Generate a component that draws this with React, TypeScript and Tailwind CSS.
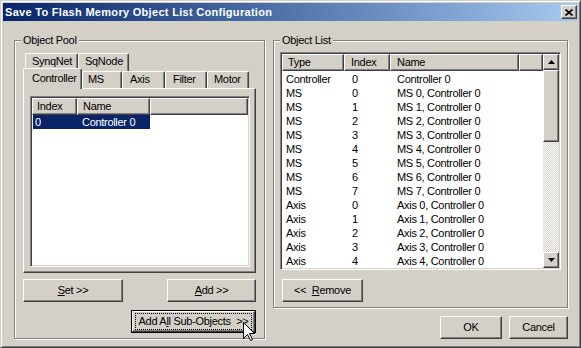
import React from 'react';

const raised =
  'bg-[#d4d0c8] border border-t-white border-l-white border-r-[#404040] border-b-[#404040] shadow-[inset_-1px_-1px_0_#808080]';
const sunken =
  'border border-t-[#808080] border-l-[#808080] border-r-white border-b-white shadow-[inset_1px_1px_0_#404040,inset_-1px_-1px_0_#d4d0c8] p-[1px]';
const etched = 'relative border border-[#808080] shadow-[inset_1px_1px_0_#fff,1px_1px_0_#fff]';

const objectRows: [string, string, string][] = [
  ['Controller', '0', 'Controller 0'],
  ...[0, 1, 2, 3, 4, 5, 6, 7].map((i): [string, string, string] => ['MS', `${i}`, `MS ${i}, Controller 0`]),
  ...[0, 1, 2, 3, 4].map((i): [string, string, string] => ['Axis', `${i}`, `Axis ${i}, Controller 0`]),
];

// Classic push button
function Button({ className = '', children }: { className?: string; children: React.ReactNode }) {
  return (
    <div className={`${raised} h-[23px] flex items-center justify-center ${className}`}>
      {children}
    </div>
  );
}

function GroupLabel({ children }: { children: React.ReactNode }) {
  return (
    <div className="absolute left-[6px] -top-[7px] px-[2px] bg-[#d4d0c8] leading-[13px]">{children}</div>
  );
}

function HeaderCell({ className = '', children }: { className?: string; children?: React.ReactNode }) {
  return (
    <div className={`${raised} h-full flex items-center leading-[13px] ${className}`}>{children}</div>
  );
}

function ScrollArrow({ up }: { up?: boolean }) {
  return (
    <div className={`${raised} h-[16px] w-[16px] flex items-center justify-center`}>
      <svg width="7" height="4" viewBox="0 0 7 4">
        <polygon points={up ? '0,4 3.5,0 7,4' : '0,0 7,0 3.5,4'} fill="#000" />
      </svg>
    </div>
  );
}

function Tab({ className = '', children }: { className?: string; children: React.ReactNode }) {
  return (
    <div
      className={`bg-[#d4d0c8] border-t border-l border-r border-t-white border-l-white border-r-[#404040] shadow-[inset_-1px_0_0_#808080] rounded-t-[2px] leading-[13px] ${className}`}
    >
      {children}
    </div>
  );
}

export default function App() {
  return (
    <div className="w-[581px] h-[348px] bg-[#d4d0c8] font-['Liberation_Sans',Arial,sans-serif] text-[11px] tracking-[-0.3px] text-black border border-t-[#d4d0c8] border-l-[#d4d0c8] border-r-[#404040] border-b-[#404040] shadow-[inset_1px_1px_0_#fff,inset_-1px_-1px_0_#808080] p-[2px] flex flex-col overflow-hidden">
      {/* Title bar */}
      <div className="h-[18px] flex items-center bg-gradient-to-r from-[#0a246a] to-[#a6caf0] pl-[2px] pr-[1px]">
        <span className="text-white font-bold tracking-[0.3px] leading-[13px] flex-1">
          Save To Flash Memory Object List Configuration
        </span>
        <div className={`${raised} w-[16px] h-[14px] flex items-center justify-center`}>
          <svg width="8" height="7" viewBox="0 0 8 7">
            <path d="M0.5 0.5 L7.5 6.5 M7.5 0.5 L0.5 6.5" stroke="#000" strokeWidth="1.7" />
          </svg>
        </div>
      </div>

      <div className="flex">
        {/* Object Pool */}
        <div className={`${etched} ml-[11px] mt-[19px] w-[251px] h-[299px] pl-[8px] pt-[12px]`}>
          <GroupLabel>Object Pool</GroupLabel>

          {/* back tab row */}
          <div className="flex h-[18px] ml-[2px]">
            <Tab className="w-[53px] h-[18px] pl-[6px] pt-[1px]">SynqNet</Tab>
            <Tab className="w-[51px] h-[18px] pl-[6px] pt-[1px]">SqNode</Tab>
          </div>
          {/* front tab row */}
          <div className="flex items-end h-[17px]">
            <Tab className="relative z-10 w-[59px] h-[21px] -mb-[1px] pl-[8px] pt-[3px]">Controller</Tab>
            <Tab className="w-[40px] h-[17px] pl-[5px] pt-[1px]">MS</Tab>
            <Tab className="w-[43px] h-[17px] pl-[7px] pt-[1px]">Axis</Tab>
            <Tab className="w-[42px] h-[17px] pl-[7px] pt-[1px]">Filter</Tab>
            <Tab className="w-[42px] h-[17px] pl-[6px] pt-[1px]">Motor</Tab>
          </div>
          <div className={`${raised} w-[233px] h-[185px] pl-[6px] pt-[7px]`}>
            <div className={`${sunken} bg-white w-[220px] h-[171px] flex flex-col`}>
              <div className="flex h-[17px]">
                <HeaderCell className="w-[45px] pl-[4px]">Index</HeaderCell>
                <HeaderCell className="w-[73px] pl-[5px]">Name</HeaderCell>
                <HeaderCell className="flex-1" />
              </div>
              <div className="ml-[1px] w-[117px] h-[14px] bg-[#0a246a] text-white flex leading-[14px]">
                <div className="w-[44px] pl-[2px]">0</div>
                <div className="pl-[5px]">Controller 0</div>
              </div>
            </div>
          </div>

          <div className="w-[233px] mt-[6px] flex justify-between">
            <Button className="w-[100px]">
              <span>
                <span className="underline">S</span>et &gt;&gt;
              </span>
            </Button>
            <Button className="w-[89px]">
              <span>
                <span className="underline">A</span>dd &gt;&gt;
              </span>
            </Button>
          </div>
          <div className="w-[233px] mt-[8px] flex justify-end">
            <div className="relative w-[125px] h-[23px] border border-black">
              <div className={`${raised} h-full flex py-[1px] px-[2px]`}>
                <div className="flex-1 border border-dotted border-black flex items-center justify-center">
                  <span>
                    Add A<span className="underline">l</span>l Sub-Objects&nbsp;&nbsp;&gt;&gt;
                  </span>
                </div>
              </div>
              {/* mouse pointer */}
              <svg className="absolute left-[111px] top-[11px]" width="13" height="20" viewBox="0 0 13 20">
                <polygon
                  points="0.5,0.5 0.5,16.5 4.5,12.5 7.5,18.5 9.5,17.5 6.5,11.5 11.5,11.5"
                  fill="#fff"
                  stroke="#000"
                  strokeWidth="1"
                />
              </svg>
            </div>
          </div>
        </div>

        {/* Object List */}
        <div className="ml-[8px] mt-[19px] w-[295px] flex flex-col">
          <div className={`${etched} h-[268px] pl-[6px] pt-[11px]`}>
            <GroupLabel>Object List</GroupLabel>
            <div className={`${sunken} bg-white w-[281px] h-[218px] flex`}>
              <div className="w-[261px] flex flex-col overflow-hidden">
                <div className="flex h-[17px] shrink-0">
                  <HeaderCell className="w-[62px] pl-[5px]">Type</HeaderCell>
                  <HeaderCell className="w-[46px] pl-[6px]">Index</HeaderCell>
                  <HeaderCell className="w-[129px] pl-[6px]">Name</HeaderCell>
                  <HeaderCell className="flex-1" />
                </div>
                <div className="pt-[1px]">
                  {objectRows.map(([type, index, name]) => (
                    <div key={name} className="flex h-[14px] leading-[14px] whitespace-nowrap">
                      <div className="w-[62px] pl-[4px]">{type}</div>
                      <div className="w-[46px] pl-[8px]">{index}</div>
                      <div className="pl-[7px]">{name}</div>
                    </div>
                  ))}
                </div>
              </div>
              {/* scrollbar */}
              <div className="w-[16px] flex flex-col">
                <ScrollArrow up />
                <div className={`${raised} h-[72px]`} />
                <div className="flex-1 bg-[image:repeating-conic-gradient(#fff_0_25%,#d4d0c8_0_50%)] bg-[length:2px_2px]" />
                <ScrollArrow />
              </div>
            </div>
            <Button className="w-[81px] mt-[9px] ml-[2px]">
              <span>
                &lt;&lt;&nbsp; <span className="underline">R</span>emove
              </span>
            </Button>
          </div>
          <div className="mt-[8px] flex justify-end gap-[7px]">
            <Button className="w-[62px]">OK</Button>
            <Button className="w-[59px]">Cancel</Button>
          </div>
        </div>
      </div>
    </div>
  );
}
